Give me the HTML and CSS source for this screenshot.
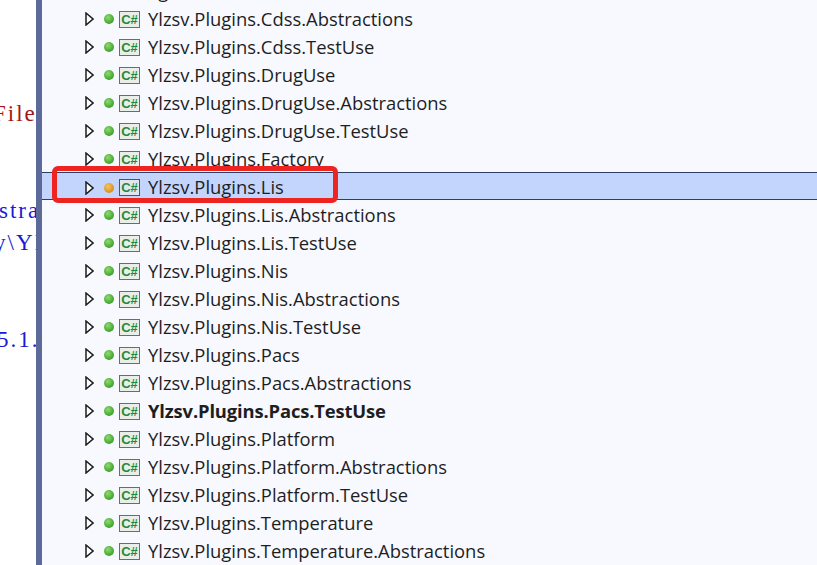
FILE: index.html
```html
<!DOCTYPE html>
<html lang="en">
<head>
<meta charset="UTF-8">
<title>Solution Explorer</title>
<link rel="stylesheet" href="styles.css">
</head>
<body>
<div class="window">
    <div class="editor">
        <div class="code-line"></div>
        <div class="code-line"></div>
        <div class="code-line"></div>
        <div class="code-line red shift-file">File</div>
        <div class="code-line"></div>
        <div class="code-line"></div>
        <div class="code-line blue shift-stra">stra</div>
        <div class="code-line blue shift-path">y\YI</div>
        <div class="code-line"></div>
        <div class="code-line"></div>
        <div class="code-line blue shift-ver">5.1.</div>
    </div>
    <div class="splitter"></div>
    <div class="tree">
        <div class="row"><span class="name">Ylzsv.Plugins.Cdss</span></div>
        <div class="row"><svg class="arrow" viewBox="0 0 9 14"><path d="M1 1 L8 7 L1 13 Z"/></svg><span class="dot"></span><span class="cs">C#</span><span class="name">Ylzsv.Plugins.Cdss.Abstractions</span></div>
        <div class="row"><svg class="arrow" viewBox="0 0 9 14"><path d="M1 1 L8 7 L1 13 Z"/></svg><span class="dot"></span><span class="cs">C#</span><span class="name">Ylzsv.Plugins.Cdss.TestUse</span></div>
        <div class="row"><svg class="arrow" viewBox="0 0 9 14"><path d="M1 1 L8 7 L1 13 Z"/></svg><span class="dot"></span><span class="cs">C#</span><span class="name">Ylzsv.Plugins.DrugUse</span></div>
        <div class="row"><svg class="arrow" viewBox="0 0 9 14"><path d="M1 1 L8 7 L1 13 Z"/></svg><span class="dot"></span><span class="cs">C#</span><span class="name">Ylzsv.Plugins.DrugUse.Abstractions</span></div>
        <div class="row"><svg class="arrow" viewBox="0 0 9 14"><path d="M1 1 L8 7 L1 13 Z"/></svg><span class="dot"></span><span class="cs">C#</span><span class="name">Ylzsv.Plugins.DrugUse.TestUse</span></div>
        <div class="row"><svg class="arrow" viewBox="0 0 9 14"><path d="M1 1 L8 7 L1 13 Z"/></svg><span class="dot"></span><span class="cs">C#</span><span class="name">Ylzsv.Plugins.Factory</span></div>
        <div class="row selected"><svg class="arrow" viewBox="0 0 9 14"><path d="M1 1 L8 7 L1 13 Z"/></svg><span class="dot orange"></span><span class="cs">C#</span><span class="name">Ylzsv.Plugins.Lis</span><div class="callout"></div></div>
        <div class="row"><svg class="arrow" viewBox="0 0 9 14"><path d="M1 1 L8 7 L1 13 Z"/></svg><span class="dot"></span><span class="cs">C#</span><span class="name">Ylzsv.Plugins.Lis.Abstractions</span></div>
        <div class="row"><svg class="arrow" viewBox="0 0 9 14"><path d="M1 1 L8 7 L1 13 Z"/></svg><span class="dot"></span><span class="cs">C#</span><span class="name">Ylzsv.Plugins.Lis.TestUse</span></div>
        <div class="row"><svg class="arrow" viewBox="0 0 9 14"><path d="M1 1 L8 7 L1 13 Z"/></svg><span class="dot"></span><span class="cs">C#</span><span class="name">Ylzsv.Plugins.Nis</span></div>
        <div class="row"><svg class="arrow" viewBox="0 0 9 14"><path d="M1 1 L8 7 L1 13 Z"/></svg><span class="dot"></span><span class="cs">C#</span><span class="name">Ylzsv.Plugins.Nis.Abstractions</span></div>
        <div class="row"><svg class="arrow" viewBox="0 0 9 14"><path d="M1 1 L8 7 L1 13 Z"/></svg><span class="dot"></span><span class="cs">C#</span><span class="name">Ylzsv.Plugins.Nis.TestUse</span></div>
        <div class="row"><svg class="arrow" viewBox="0 0 9 14"><path d="M1 1 L8 7 L1 13 Z"/></svg><span class="dot"></span><span class="cs">C#</span><span class="name">Ylzsv.Plugins.Pacs</span></div>
        <div class="row"><svg class="arrow" viewBox="0 0 9 14"><path d="M1 1 L8 7 L1 13 Z"/></svg><span class="dot"></span><span class="cs">C#</span><span class="name">Ylzsv.Plugins.Pacs.Abstractions</span></div>
        <div class="row"><svg class="arrow" viewBox="0 0 9 14"><path d="M1 1 L8 7 L1 13 Z"/></svg><span class="dot"></span><span class="cs">C#</span><span class="name bold">Ylzsv.Plugins.Pacs.TestUse</span></div>
        <div class="row"><svg class="arrow" viewBox="0 0 9 14"><path d="M1 1 L8 7 L1 13 Z"/></svg><span class="dot"></span><span class="cs">C#</span><span class="name">Ylzsv.Plugins.Platform</span></div>
        <div class="row"><svg class="arrow" viewBox="0 0 9 14"><path d="M1 1 L8 7 L1 13 Z"/></svg><span class="dot"></span><span class="cs">C#</span><span class="name">Ylzsv.Plugins.Platform.Abstractions</span></div>
        <div class="row"><svg class="arrow" viewBox="0 0 9 14"><path d="M1 1 L8 7 L1 13 Z"/></svg><span class="dot"></span><span class="cs">C#</span><span class="name">Ylzsv.Plugins.Platform.TestUse</span></div>
        <div class="row"><svg class="arrow" viewBox="0 0 9 14"><path d="M1 1 L8 7 L1 13 Z"/></svg><span class="dot"></span><span class="cs">C#</span><span class="name">Ylzsv.Plugins.Temperature</span></div>
        <div class="row"><svg class="arrow" viewBox="0 0 9 14"><path d="M1 1 L8 7 L1 13 Z"/></svg><span class="dot"></span><span class="cs">C#</span><span class="name">Ylzsv.Plugins.Temperature.Abstractions</span></div>
    </div>
</div>
</body>
</html>
```
FILE: styles.css
```css
html, body {
    margin: 0;
    padding: 0;
    height: 100%;
    overflow: hidden;
    background-color: #ffffff;
}

.window {
    display: flex;
    height: 565px;
    overflow: hidden;
}

.editor {
    width: 36px;
    flex-shrink: 0;
    overflow: hidden;
    padding-top: 1px;
    box-sizing: border-box;
    font-family: "Liberation Serif", serif;
    font-size: 23px;
    letter-spacing: 2px;
}

.code-line {
    height: 32.3px;
    line-height: 32px;
    white-space: nowrap;
}

.red { color: #a31515; }
.blue { color: #1a1ad6; }

.shift-file { margin-left: -7px; }
.shift-stra { margin-left: -1px; }
.shift-path { margin-left: -6px; }
.shift-ver { margin-left: -3px; }

.splitter {
    width: 6px;
    flex-shrink: 0;
    background-color: #5b6a98;
}

.tree {
    flex: 1;
    margin-top: -24px;
    background-color: #f7f9ff;
    font-family: "Open Sans", sans-serif;
    font-size: 18.4px;
    color: #1e1e1e;
}

.row {
    position: relative;
    display: flex;
    align-items: center;
    height: 28px;
    padding-left: 43px;
    box-sizing: border-box;
    white-space: nowrap;
}

.arrow {
    width: 9px;
    height: 14px;
    flex-shrink: 0;
    margin: 2px 10px 0 0;
    fill: #ffffff;
    stroke: #1e1e1e;
    stroke-width: 1.5;
}

.dot {
    width: 10px;
    height: 10px;
    flex-shrink: 0;
    border-radius: 50%;
    margin: 2px 5px 0 0;
    background: radial-gradient(circle at 40% 35%, #8fdc6c, #3a9e2a 75%);
}

.dot.orange {
    background: radial-gradient(circle at 40% 35%, #f6c55a, #d98a1c 75%);
}

.cs {
    width: 19px;
    height: 15px;
    flex-shrink: 0;
    margin: 2px 8px 0 0;
    border: 1px solid #6c6c6c;
    background-color: #e9eee9;
    color: #1f8a3c;
    font-family: "Liberation Sans", sans-serif;
    font-size: 13px;
    font-weight: bold;
    line-height: 15px;
    text-align: center;
}

.name.bold { font-weight: bold; letter-spacing: -0.15px; }

.selected {
    background-color: #c3d5fd;
    height: 28px;
    padding-top: 1px;
    border-top: 1px solid #2d3e66;
    border-bottom: 1px solid #2d3e66;
}

.selected .cs { border-color: #44566e; background-color: #dfe6ee; }

.callout {
    position: absolute;
    left: 10px;
    top: -7px;
    width: 286px;
    height: 37px;
    box-sizing: border-box;
    border: 5px solid #ee2420;
    border-radius: 6px;
}
```
